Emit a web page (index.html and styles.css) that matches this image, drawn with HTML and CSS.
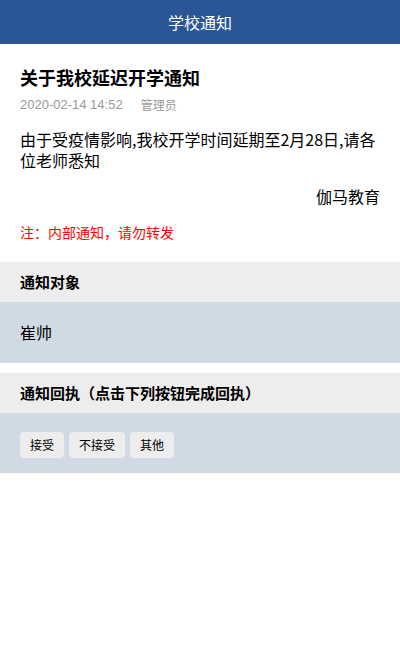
FILE: index.html
```html
<!DOCTYPE html>
<html>
<head>
    <meta charset="UTF-8">
    <title>学校通知</title>
    <link rel="stylesheet" href="styles.css">
</head>
<body>

<div class="header">学校通知</div>

<div class="article">
    <h1 class="title">关于我校延迟开学通知</h1>
    <div class="meta"><span class="time">2020-02-14 14:52</span><span class="author">管理员</span></div>
    <p class="content">由于受疫情影响,我校开学时间延期至2月28日,请各位老师悉知</p>
    <p class="sign">伽马教育</p>
    <p class="note">注：内部通知，请勿转发</p>
</div>

<div class="section">
    <div class="section-head">通知对象</div>
    <div class="section-body">崔帅</div>
</div>

<div class="section">
    <div class="section-head">通知回执（点击下列按钮完成回执）</div>
    <div class="section-body buttons">
        <a href="javascript:;" class="btn">接受</a>
        <a href="javascript:;" class="btn">不接受</a>
        <a href="javascript:;" class="btn">其他</a>
    </div>
</div>

</body>
</html>
```

FILE: styles.css
```css
*{ margin: 0; padding: 0; text-decoration: none; box-sizing: border-box;}
body { font-family: "Noto Sans CJK SC", "Liberation Sans", sans-serif; color: #000; background: #fff;}
.header { height: 44px; line-height: 44px; background: #2a5596; color: #fff; font-size: 16px; text-align: center;}
.article { padding: 21px 20px 21px;}
.title { font-size: 18px; line-height: 24px; font-weight: bold;}
.meta { display: flex; align-items: center; height: 18px; margin-top: 6px; font-size: 12px; color: #999;}
.meta .time { font-family: "Liberation Sans", sans-serif; font-size: 13px;}
.meta .author { margin-left: 18px;}
.content { margin-top: 16px; font-size: 16px; line-height: 21px;}
.sign { margin-top: 15px; font-size: 16px; line-height: 21px; text-align: right;}
.note { margin-top: 16px; font-size: 14px; line-height: 18px; color: #f00;}
.section + .section { margin-top: 10px;}
.section-head { height: 40px; line-height: 40px; padding-left: 20px; background: #ededed; font-size: 15px; font-weight: bold;}
.section-body { background: #d0dae4; padding: 20px; font-size: 16px; line-height: 21px;}
.buttons { display: flex; gap: 5px; padding: 19px 20px 15px;}
.btn { display: block; height: 26px; line-height: 26px; padding: 0 10px; border-radius: 4px; background: #ededed; color: #000; font-size: 12px;}
```
